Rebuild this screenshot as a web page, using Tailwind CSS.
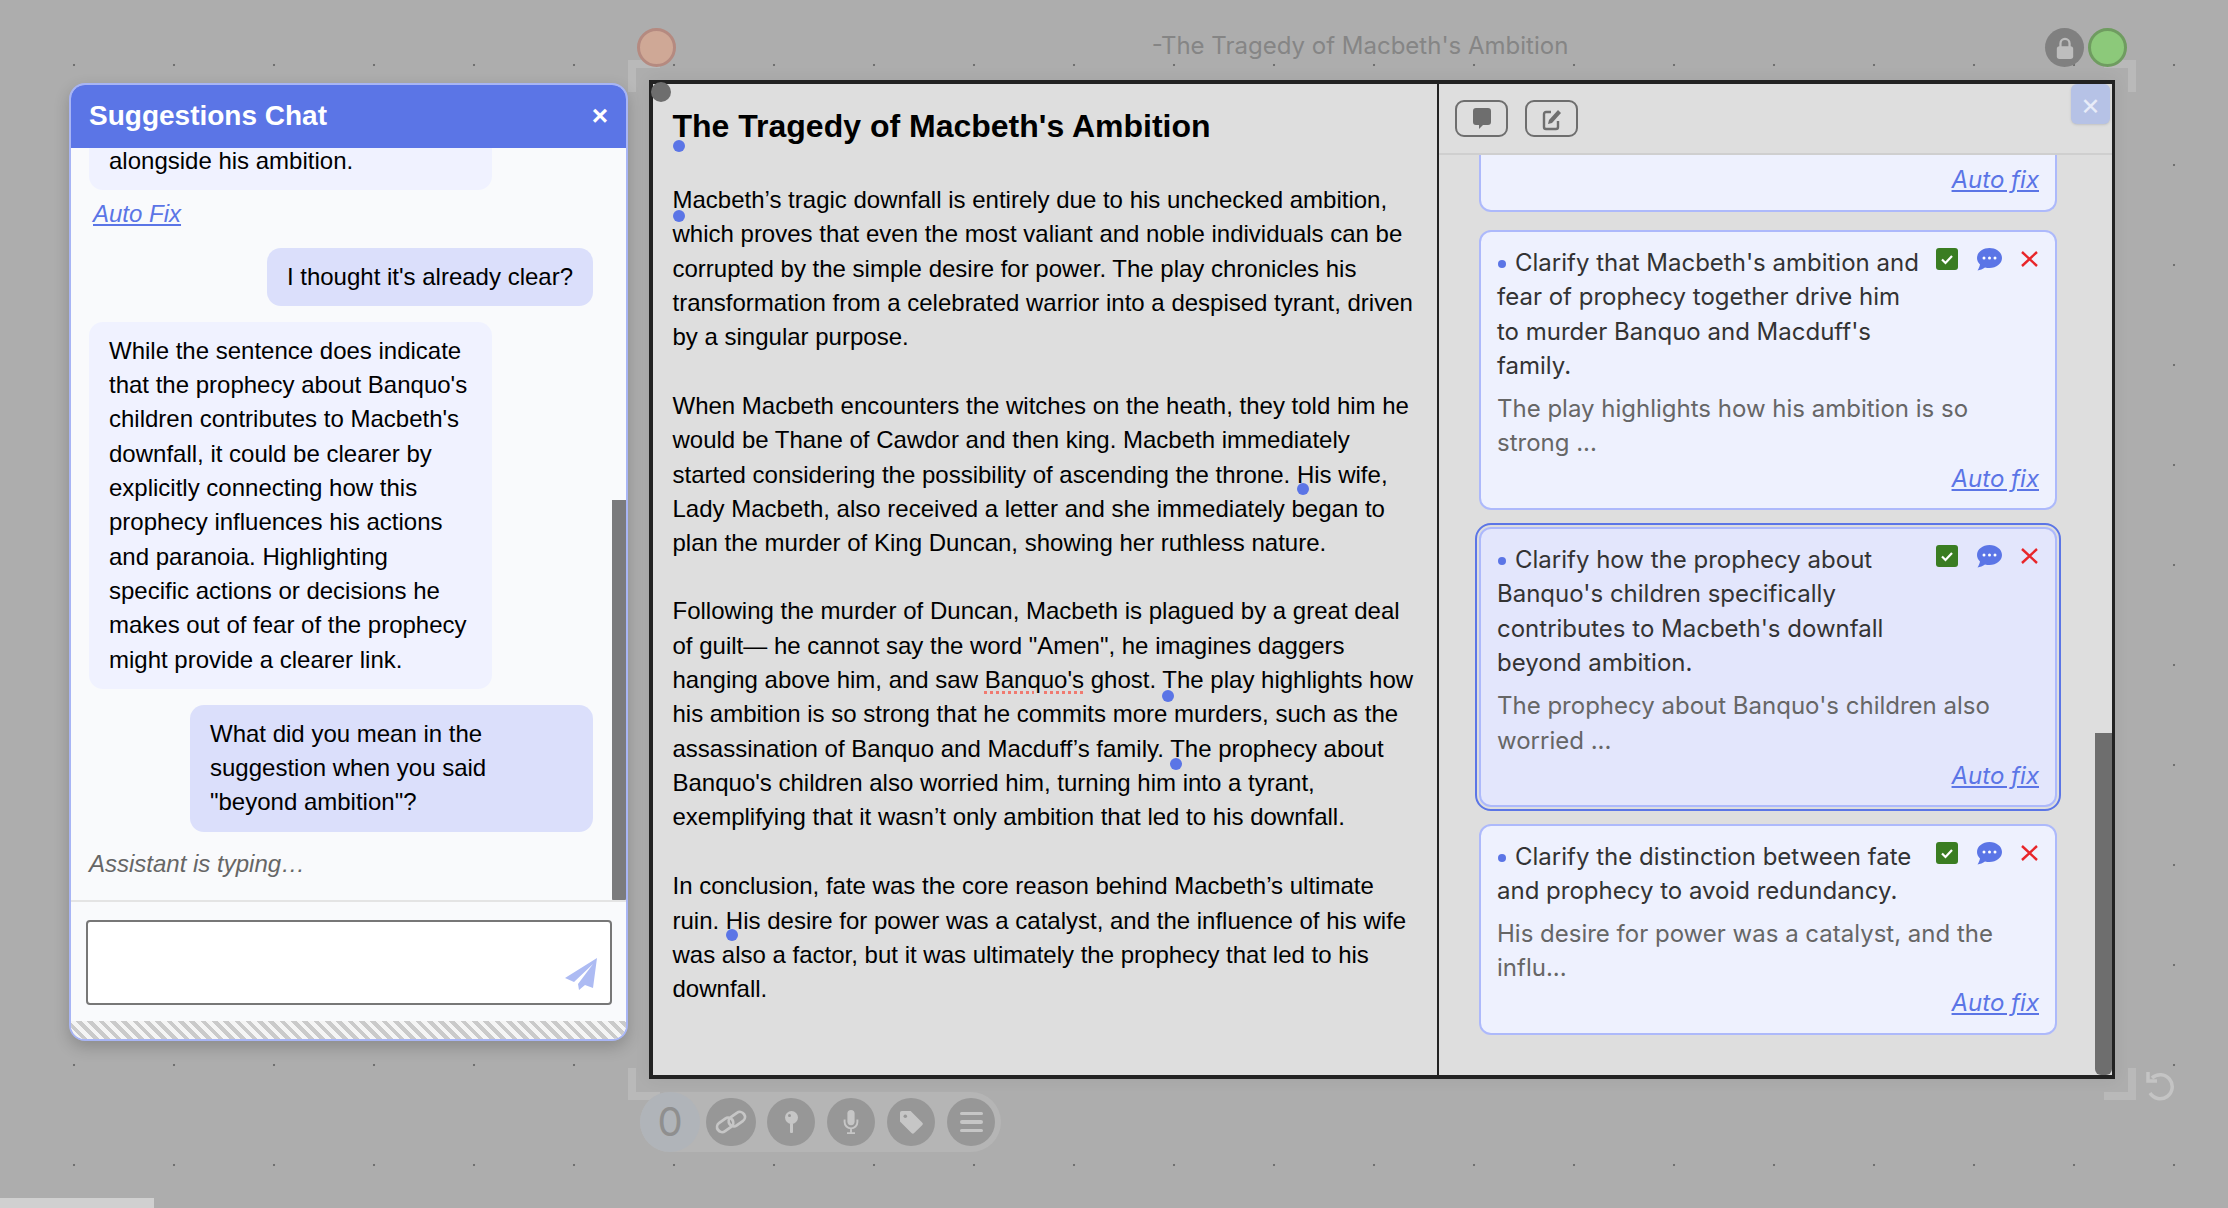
<!DOCTYPE html>
<html lang="en">
<head>
  <meta charset="UTF-8" />
  <title>The Tragedy of Macbeth's Ambition</title>
  <script src="https://cdn.jsdelivr.net/npm/@tailwindcss/browser@4"></script>
</head>
<body class="relative w-[2228px] h-[1208px] overflow-hidden bg-[#adadad] font-['Liberation_Sans',sans-serif] text-[24px] leading-[34.3px] text-black">

  <!-- canvas dots -->
  <div class="absolute inset-0 bg-[radial-gradient(circle,#707070_1px,transparent_1.6px)] bg-[size:100px_100px] bg-[position:24px_15px]"></div>

  <!-- horizontal scroll stub -->
  <div class="absolute left-0 bottom-0 w-[154px] h-[10px] bg-[#d0d0d0]"></div>

  <!-- selection corners -->
  <div class="absolute left-[628px] top-[60px] w-[32px] h-[32px] border-l-[8px] border-t-[8px] border-[#b9b9b9]"></div>
  <div class="absolute left-[628px] top-[1068px] w-[32px] h-[32px] border-l-[8px] border-b-[8px] border-[#b9b9b9]"></div>
  <div class="absolute left-[2104px] top-[60px] w-[32px] h-[32px] border-r-[8px] border-t-[8px] border-[#b9b9b9]"></div>
  <div class="absolute left-[2104px] top-[1068px] w-[32px] h-[32px] border-r-[8px] border-b-[8px] border-[#b9b9b9]"></div>

  <!-- title bar -->
  <div class="absolute left-[637px] top-[28px] w-[39px] h-[39px] rounded-full bg-[#cfa896] border-[3px] border-[#b58a80]"></div>
  <div class="absolute left-[1000px] top-[28px] w-[720px] text-center font-['Inter',sans-serif] text-[24px] leading-[36px] text-[#858585]">-The Tragedy of Macbeth's Ambition</div>
  <div class="absolute left-[2045px] top-[28px] w-[39px] h-[39px] rounded-full bg-[#808080] flex items-center justify-center">
    <svg width="20" height="24" viewBox="0 0 22 26" fill="none"><path d="M6 12V8a5 5 0 0 1 10 0v4" stroke="#bdbdbd" stroke-width="2.5"/><rect x="2" y="11" width="18" height="14" rx="3" fill="#bdbdbd"/></svg>
  </div>
  <div class="absolute left-[2088px] top-[28px] w-[39px] h-[39px] rounded-full bg-[#8cc97a] border-[3px] border-[#6f9c60]"></div>

  <!-- editor window -->
  <div class="absolute left-[649px] top-[80px] w-[1466px] h-[999px] flex border-[4px] border-r-[3px] border-[#222] bg-[#dedede] shadow-[0_0_16px_rgba(0,0,0,0.06)]">

    <!-- document -->
    <div class="relative w-[786px] h-full border-r-[2px] border-[#222] pl-[19.5px] pr-[17px] pt-[22px]">
      <h1 class="text-[32px] leading-[40px] font-bold mb-[37px]">The Tragedy of Macbeth's Ambition</h1>
      <p class="mb-[34.6px]">Macbeth’s tragic downfall is entirely due to his unchecked ambition, which proves that even the most valiant and noble individuals can be corrupted by the simple desire for power. The play chronicles his transformation from a celebrated warrior into a despised tyrant, driven by a singular purpose.</p>
      <p class="mb-[33.8px]">When Macbeth encounters the witches on the heath, they told him he would be Thane of Cawdor and then king. Macbeth immediately started considering the possibility of ascending the throne. His wife, Lady Macbeth, also received a letter and she immediately began to plan the murder of King Duncan, showing her ruthless nature.</p>
      <p class="mb-[35px]">Following the murder of Duncan, Macbeth is plagued by a great deal of guilt— he cannot say the word "Amen", he imagines daggers hanging above him, and saw <span class="underline decoration-dotted decoration-[#f07a70] decoration-[3px] underline-offset-[3px]">Banquo's</span> ghost. The play highlights how his ambition is so strong that he commits more murders, such as the assassination of Banquo and Macduff’s family. The prophecy about Banquo's children also worried him, turning him into a tyrant, exemplifying that it wasn’t only ambition that led to his downfall.</p>
      <p>In conclusion, fate was the core reason behind Macbeth’s ultimate ruin. His desire for power was a catalyst, and the influence of his wife was also a factor, but it was ultimately the prophecy that led to his downfall.</p>

      <!-- sentence markers -->
      <span class="absolute left-[-2px] top-[-2px] w-[20px] h-[20px] rounded-full bg-[#6e6e6e]"></span>
      <span class="absolute left-[20px] top-[56px] w-[12px] h-[12px] rounded-full bg-[#5b75e6]"></span>
      <span class="absolute left-[20px] top-[126px] w-[12px] h-[12px] rounded-full bg-[#5b75e6]"></span>
      <span class="absolute left-[644px] top-[399px] w-[12px] h-[12px] rounded-full bg-[#5b75e6]"></span>
      <span class="absolute left-[509px] top-[606px] w-[12px] h-[12px] rounded-full bg-[#5b75e6]"></span>
      <span class="absolute left-[517px] top-[674px] w-[12px] h-[12px] rounded-full bg-[#5b75e6]"></span>
      <span class="absolute left-[73px] top-[845px] w-[12px] h-[12px] rounded-full bg-[#5b75e6]"></span>
    </div>

    <!-- suggestions panel -->
    <div class="relative flex-1 flex flex-col h-full overflow-hidden font-['Inter',sans-serif]">
      <div class="h-[71px] shrink-0 border-b-[2px] border-[#cfcfcf] pl-[16px] pt-[16px] flex gap-[17px]">
        <button class="w-[53px] h-[37px] rounded-[9px] border-[2px] border-[#6e6e6e] flex items-center justify-center">
          <svg width="20" height="24" viewBox="0 0 20 24"><path d="M4 1h12a3 3 0 0 1 3 3v11a3 3 0 0 1-3 3h-5l-4 4v-4H4a3 3 0 0 1-3-3V4a3 3 0 0 1 3-3z" fill="#6e6e6e"/></svg>
        </button>
        <button class="w-[53px] h-[37px] rounded-[9px] border-[2px] border-[#6e6e6e] flex items-center justify-center">
          <svg width="20" height="24" viewBox="0 0 20 24" fill="none"><path d="M9 5H4a2 2 0 0 0-2 2v13a2 2 0 0 0 2 2h10a2 2 0 0 0 2-2v-6" stroke="#6e6e6e" stroke-width="2.4"/><path d="M7 13l9-10 3 3-9 10-4 1z" fill="#6e6e6e"/></svg>
        </button>
      </div>

      <div class="flex-1 overflow-hidden pl-[40px] pr-[55px]">
        <!-- first card scrolled under the toolbar -->
        <div class="h-[57px] mb-[18px] rounded-b-[12px] bg-[#eef1fe] border-x-[2px] border-b-[2px] border-[#adb9fb] flex items-center justify-end pr-[16px] pb-[4px] text-[#5b75e6] italic underline">Auto fix</div>

        <div class="mb-[17px] rounded-[12px] bg-[#eef1fe] border-[2px] border-[#adb9fb] px-[16px] pt-[14px] pb-[12px]">
          <div class="flex justify-between">
            <p class="w-[428px] text-[#333]"><span class="inline-block w-[8px] h-[8px] rounded-full bg-[#5b75e6] mr-[9px] mb-[3px] ml-[1px]"></span>Clarify that Macbeth's ambition and fear of prophecy together drive him to murder Banquo and Macduff's family.</p>
            <div class="flex items-start gap-[19px] pt-[2px]">
              <svg width="22" height="22" viewBox="0 0 22 22"><rect width="22" height="22" rx="3" fill="#3a7d22"/><path d="M6 11.5l3.5 3.5 6.5-7" fill="none" stroke="#fff" stroke-width="2.2"/></svg>
              <svg width="25" height="23" viewBox="0 0 25 23"><path d="M12.5 0C5.6 0 0 4.4 0 10c0 2.5 1.1 4.700 3 6.500-.3 2-1.400 4.300-2.500 6 2.500-.3 5.500-1.500 7.500-3 1.400.4 3 .5 4.500.5C19.400 20 25 15.600 25 10S19.400 0 12.500 0z" fill="#5b75e6"/><circle cx="7" cy="10" r="1.500" fill="#fff"/><circle cx="12.500" cy="10" r="1.500" fill="#fff"/><circle cx="18" cy="10" r="1.500" fill="#fff"/></svg>
              <svg class="mt-[3px] mr-[1px]" width="17" height="16" viewBox="0 0 17 16"><path d="M1 1l15 14M16 1L1 15" stroke="#e8262a" stroke-width="2.400"/></svg>
            </div>
          </div>
          <p class="mt-[9px] text-[#666]">The play highlights how his ambition is so strong ...</p>
          <div class="mt-[1px] text-right text-[#5b75e6] italic underline">Auto fix</div>
        </div>

        <div class="mb-[17px] rounded-[12px] bg-[#e3e6fc] border-[2px] border-[#adb9fb] outline-[2px] outline-offset-[2px] outline-[#5b75e6] px-[16px] pt-[14px] pb-[12px]">
          <div class="flex justify-between">
            <p class="w-[428px] text-[#333]"><span class="inline-block w-[8px] h-[8px] rounded-full bg-[#5b75e6] mr-[9px] mb-[3px] ml-[1px]"></span>Clarify how the prophecy about Banquo's children specifically contributes to Macbeth's downfall beyond ambition.</p>
            <div class="flex items-start gap-[19px] pt-[2px]">
              <svg width="22" height="22" viewBox="0 0 22 22"><rect width="22" height="22" rx="3" fill="#3a7d22"/><path d="M6 11.5l3.5 3.5 6.5-7" fill="none" stroke="#fff" stroke-width="2.2"/></svg>
              <svg width="25" height="23" viewBox="0 0 25 23"><path d="M12.5 0C5.6 0 0 4.4 0 10c0 2.5 1.1 4.700 3 6.500-.3 2-1.400 4.300-2.500 6 2.500-.3 5.500-1.500 7.500-3 1.400.4 3 .5 4.500.5C19.400 20 25 15.600 25 10S19.400 0 12.500 0z" fill="#5b75e6"/><circle cx="7" cy="10" r="1.500" fill="#fff"/><circle cx="12.500" cy="10" r="1.500" fill="#fff"/><circle cx="18" cy="10" r="1.500" fill="#fff"/></svg>
              <svg class="mt-[3px] mr-[1px]" width="17" height="16" viewBox="0 0 17 16"><path d="M1 1l15 14M16 1L1 15" stroke="#e8262a" stroke-width="2.400"/></svg>
            </div>
          </div>
          <p class="mt-[9px] text-[#666]">The prophecy about Banquo's children also worried ...</p>
          <div class="mt-[1px] text-right text-[#5b75e6] italic underline">Auto fix</div>
        </div>

        <div class="rounded-[12px] bg-[#eef1fe] border-[2px] border-[#adb9fb] px-[16px] pt-[14px] pb-[12px]">
          <div class="flex justify-between">
            <p class="w-[428px] text-[#333]"><span class="inline-block w-[8px] h-[8px] rounded-full bg-[#5b75e6] mr-[9px] mb-[3px] ml-[1px]"></span>Clarify the distinction between fate and prophecy to avoid redundancy.</p>
            <div class="flex items-start gap-[19px] pt-[2px]">
              <svg width="22" height="22" viewBox="0 0 22 22"><rect width="22" height="22" rx="3" fill="#3a7d22"/><path d="M6 11.5l3.5 3.5 6.5-7" fill="none" stroke="#fff" stroke-width="2.2"/></svg>
              <svg width="25" height="23" viewBox="0 0 25 23"><path d="M12.5 0C5.6 0 0 4.4 0 10c0 2.5 1.1 4.700 3 6.500-.3 2-1.400 4.300-2.500 6 2.500-.3 5.500-1.500 7.500-3 1.400.4 3 .5 4.500.5C19.400 20 25 15.600 25 10S19.400 0 12.500 0z" fill="#5b75e6"/><circle cx="7" cy="10" r="1.500" fill="#fff"/><circle cx="12.500" cy="10" r="1.500" fill="#fff"/><circle cx="18" cy="10" r="1.500" fill="#fff"/></svg>
              <svg class="mt-[3px] mr-[1px]" width="17" height="16" viewBox="0 0 17 16"><path d="M1 1l15 14M16 1L1 15" stroke="#e8262a" stroke-width="2.400"/></svg>
            </div>
          </div>
          <p class="mt-[8px] text-[#666]">His desire for power was a catalyst, and the influ...</p>
          <div class="mt-[1px] text-right text-[#5b75e6] italic underline">Auto fix</div>
        </div>
      </div>

      <!-- panel scrollbar -->
      <div class="absolute right-0 top-[649px] w-[17px] h-[342px] rounded-b-[6px] bg-[#6e6e6e]"></div>
      <button class="absolute right-[2px] top-0 w-[39px] h-[40px] rounded-[6px] bg-[#b6c2e6] shadow text-[#e8ecf8] text-[30px] leading-[38px]">×</button>
    </div>
  </div>

  <!-- bottom toolbar -->
  <div class="absolute left-[640px] top-[1092px] w-[361px] h-[60px] rounded-full bg-[#b5b5b5] flex items-center text-[#8f8f8f]">
    <div class="w-[60px] h-[60px] rounded-full bg-[#b0b4b9] flex items-center justify-center text-[40px] font-['Inter',sans-serif]">0</div>
    <div class="ml-[6px] w-[50px] h-[48px] rounded-full bg-[#979797] flex items-center justify-center">
      <svg width="32" height="24" viewBox="0 0 34 26" fill="none" stroke="#c6c6c6" stroke-width="3"><rect x="1" y="11" width="19" height="11" rx="5.500" transform="rotate(-35 10 16)"/><rect x="14" y="4" width="19" height="11" rx="5.500" transform="rotate(-35 24 10)"/></svg>
    </div>
    <div class="ml-[11px] w-[48px] h-[48px] rounded-full bg-[#979797] flex items-center justify-center">
      <svg width="13" height="22" viewBox="0 0 13 22"><circle cx="6.500" cy="6.500" r="6.500" fill="#c6c6c6"/><circle cx="4.500" cy="4.500" r="1.500" fill="#979797"/><rect x="5" y="12" width="3" height="10" rx="1" fill="#c6c6c6"/></svg>
    </div>
    <div class="ml-[12px] w-[48px] h-[48px] rounded-full bg-[#979797] flex items-center justify-center">
      <svg width="16" height="24" viewBox="0 0 18 30" fill="none"><rect x="4.500" y="0" width="9" height="19" rx="4.500" fill="#c6c6c6"/><path d="M1 12v3a8 8 0 0 0 16 0v-3M9 23v5M4 29h10" stroke="#c6c6c6" stroke-width="2.400"/></svg>
    </div>
    <div class="ml-[12px] w-[48px] h-[48px] rounded-full bg-[#979797] flex items-center justify-center">
      <svg width="23" height="23" viewBox="0 0 26 26"><path d="M2 0h10l13 13a2 2 0 0 1 0 3l-9 9a2 2 0 0 1-3 0L0 12V2a2 2 0 0 1 2-2z" fill="#c6c6c6"/><circle cx="6" cy="6" r="2" fill="#979797"/></svg>
    </div>
    <div class="ml-[12px] w-[48px] h-[48px] rounded-full bg-[#979797] flex flex-col items-center justify-center gap-[5px]">
      <span class="w-[23px] h-[3.5px] rounded-full bg-[#c6c6c6]"></span>
      <span class="w-[23px] h-[3.5px] rounded-full bg-[#c6c6c6]"></span>
      <span class="w-[23px] h-[3.5px] rounded-full bg-[#c6c6c6]"></span>
    </div>
  </div>

  <!-- undo -->
  <svg class="absolute left-[2146px] top-[1071px]" width="30" height="30" viewBox="0 0 30 30" fill="none" stroke="#c4c4c4" stroke-width="3.500"><path d="M6 7a12 12 0 1 1-2 15"/><path d="M2 1v9h9" /></svg>

  <!-- chat window -->
  <div class="absolute left-[69px] top-[83px] w-[559px] h-[958px] flex flex-col overflow-hidden rounded-[16px] border-[2px] border-[#a8b5f5] bg-[#f9fafc] shadow-[0_6px_16px_rgba(0,0,0,0.2)]">
    <div class="h-[63px] shrink-0 bg-[#5b75e6] text-white flex items-center justify-between pl-[18px] pr-[18px] pb-[1px]">
      <span class="font-bold text-[28px]">Suggestions Chat</span>
      <span class="font-bold text-[28px] leading-[28px]">×</span>
    </div>
    <div class="relative h-[754px] shrink-0 overflow-hidden border-b-[2px] border-[#e4e4e4] pl-[18px] pr-[33px]">
      <div class="w-[403px] -mt-[16px] rounded-[14px] bg-[#f0f2ff] px-[20px] py-[12px]">alongside his ambition.</div>
      <a class="block ml-[4px] mt-[7px] text-[#5b75e6] italic underline">Auto Fix</a>
      <div class="flex justify-end mt-[16px]"><div class="rounded-[14px] bg-[#dbdffb] px-[20px] py-[12px]">I thought it's already clear?</div></div>
      <div class="w-[403px] mt-[16px] rounded-[14px] bg-[#f0f2ff] px-[20px] py-[12px]">While the sentence does indicate that the prophecy about Banquo's children contributes to Macbeth's downfall, it could be clearer by explicitly connecting how this prophecy influences his actions and paranoia. Highlighting specific actions or decisions he makes out of fear of the prophecy might provide a clearer link.</div>
      <div class="flex justify-end mt-[16px]"><div class="w-[403px] rounded-[14px] bg-[#dbdffb] px-[20px] py-[12px]">What did you mean in the suggestion when you said "beyond ambition"?</div></div>
      <p class="mt-[15px] text-[#666] italic">Assistant is typing…</p>
      <div class="absolute right-0 top-[352px] w-[14px] h-[402px] rounded-b-[4px] bg-[#7b7b7d]"></div>
    </div>
    <div class="relative flex-1 px-[14.5px] pt-[18px]">
      <div class="h-[85px] rounded-[4px] border-[2px] border-[#777] bg-white"></div>
      <svg class="absolute right-[29px] top-[56px]" width="32" height="32" viewBox="0 0 32 32"><path d="M32 0L0 20l9 4L28 6 13 26l1 6 6-5 8 3z" fill="#adbbf3"/></svg>
    </div>
    <div class="h-[18px] shrink-0 bg-[repeating-linear-gradient(45deg,#cacaca_0,#cacaca_4px,#f5f5f5_4px,#f5f5f5_8px)]"></div>
  </div>

</body>
</html>
